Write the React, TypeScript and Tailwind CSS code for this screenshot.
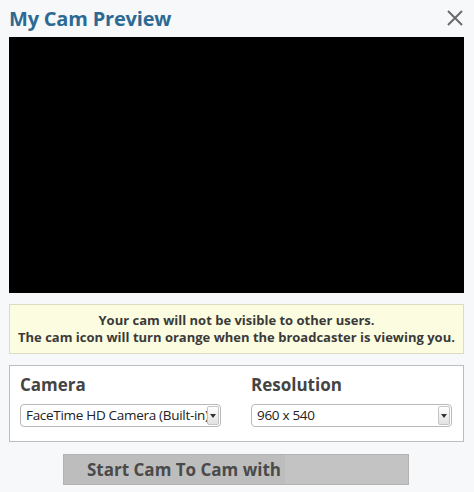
import React from "react"

const font = { fontFamily: '"Open Sans", "Noto Sans", sans-serif' }

function SelectBox({ value, width }: { value: string; width: string }) {
  return (
    <div
      className={`flex h-[23px] items-center overflow-hidden rounded-[4px] border border-[#b9b9b9] bg-white ${width}`}
    >
      <span className="min-w-0 flex-1 overflow-hidden whitespace-nowrap pl-[5px] text-[13.5px] leading-none tracking-[-0.3px] text-[#222]">
        {value}
      </span>
      <span className="mr-[1px] flex h-[19px] w-[12px] shrink-0 items-center justify-center rounded-[2px] border border-[#c4c4c4] bg-gradient-to-b from-white to-[#e2e2e2]">
        <svg width="6" height="4" viewBox="0 0 6 4">
          <path d="M0 0h6L3 4z" fill="#333" />
        </svg>
      </span>
    </div>
  )
}

export default function App() {
  return (
    <div className="h-[492px] w-[474px] bg-[#f7f8fa] pl-[9px] pr-[10px]" style={font}>
      <div className="flex h-[37px] items-center justify-between">
        <h1 className="text-[20px] font-bold leading-none tracking-[-0.2px] text-[#2d6a93]">
          My Cam Preview
        </h1>
        <svg width="16" height="16" viewBox="0 0 16 16" className="mr-[1px] mt-[-1px]">
          <path d="M1 1L15 15M15 1L1 15" stroke="#6b6b6b" strokeWidth="2" />
        </svg>
      </div>

      <div className="h-[256px] bg-black" />

      <div className="mt-[11px] flex h-[50px] flex-col items-center justify-center border border-[#dcdcc4] bg-[#fcfce0] text-[13px] font-bold leading-[17px] text-[#3a3a3a]">
        <span>Your cam will not be visible to other users.</span>
        <span>The cam icon will turn orange when the broadcaster is viewing you.</span>
      </div>

      <div className="mt-[11px] flex h-[77px] gap-[30px] border border-[#bdbdbd] bg-white px-[10px] pt-[8px]">
        <div className="flex flex-col">
          <span className="text-[17px] font-bold leading-[22px] text-[#444]">Camera</span>
          <div className="mt-[8px]">
            <SelectBox value="FaceTime HD Camera (Built-in)" width="w-[201px]" />
          </div>
        </div>
        <div className="flex flex-col">
          <span className="text-[17px] font-bold leading-[22px] text-[#444]">Resolution</span>
          <div className="mt-[8px]">
            <SelectBox value="960 x 540" width="w-[201px]" />
          </div>
        </div>
      </div>

      <div className="mt-[12px] flex justify-start pl-[54px]">
        <button className="flex h-[31px] w-[346px] items-center border border-[#b3b3b3] bg-[#bdbdbd] pl-[23px] text-[17px] font-bold text-[#4a4a4a]">
          <span>Start Cam To Cam with</span>
          <span className="ml-[4px] h-full flex-1 bg-[#c3c3c3]" />
        </button>
      </div>
    </div>
  )
}
